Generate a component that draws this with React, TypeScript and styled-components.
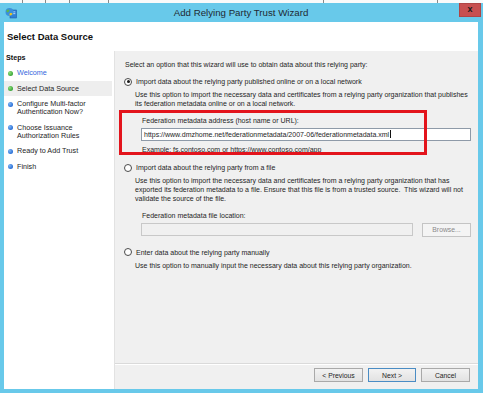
import styled, { createGlobalStyle, css } from 'styled-components';

const GlobalStyle = createGlobalStyle`
  html, body {
    margin: 0;
    padding: 0;
    background: #ffffff;
  }
  body {
    font-family: "Liberation Sans", Arial, sans-serif;
    color: #1e1e1e;
  }
`;

const steps = [
  { label: ['Welcome'], done: true, link: true },
  { label: ['Select Data Source'], done: true, current: true },
  { label: ['Configure Multi-factor', 'Authentication Now?'] },
  { label: ['Choose Issuance', 'Authorization Rules'] },
  { label: ['Ready to Add Trust'] },
  { label: ['Finish'] },
];

function WizardIcon() {
  return (
    <svg width="12" height="12" viewBox="0 0 12 12">
      <rect x="5" y="3" width="6.5" height="8" fill="#2f7fd6" stroke="#1b5ea8" strokeWidth="0.6" />
      <rect x="6.3" y="4.5" width="4" height="0.8" fill="#cfe6ff" />
      <rect x="6.3" y="6.3" width="4" height="0.8" fill="#cfe6ff" />
      <circle cx="4.5" cy="5" r="4" fill="#3a8fdc" />
      <path d="M1.5 3.5 Q3 2 4.5 3 Q4 5 2.5 5.5 Q1 5 1.5 3.5 Z" fill="#5cb84a" />
      <path d="M5 6 Q7 5.5 7.5 7 Q6 8.8 4.5 8.6 Q4.2 7 5 6 Z" fill="#f0c419" />
    </svg>
  );
}

export default function App() {
  return (
    <>
      <GlobalStyle />
      <Page>
        <BehindStrip />
        <Window>
          <TitleBar>
            <TitleIcon>
              <WizardIcon />
            </TitleIcon>
            <Title>Add Relying Party Trust Wizard</Title>
            <CloseButton>x</CloseButton>
          </TitleBar>
          <Content>
            <Header>Select Data Source</Header>
            <Body>
              <StepsPanel>
                <StepsLabel>Steps</StepsLabel>
                {steps.map((s) => (
                  <StepItem key={s.label[0]} $current={!!s.current}>
                    <Dot $done={!!s.done} />
                    <StepText $link={!!s.link}>
                      {s.label.map((l) => (
                        <div key={l}>{l}</div>
                      ))}
                    </StepText>
                  </StepItem>
                ))}
              </StepsPanel>

              <RightPanel>
                <Main>
                  <Intro>Select an option that this wizard will use to obtain data about this relying party:</Intro>

                  <RadioRow>
                    <Radio $checked />
                    <span>Import data about the relying party published online or on a local network</span>
                  </RadioRow>
                  <Desc>
                    Use this option to import the necessary data and certificates from a relying party organization that publishes
                    <br />
                    its federation metadata online or on a local network.
                  </Desc>
                  <Field>
                    <FieldLabel>Federation metadata address (host name or URL):</FieldLabel>
                    <TextBox $width={330}>
                      https://www.dmzhome.net/federationmetadata/2007-06/federationmetadata.xml
                      <Caret />
                    </TextBox>
                    <Example>Example: fs.contoso.com or https://www.contoso.com/app</Example>
                  </Field>

                  <RadioRow $top={9}>
                    <Radio />
                    <span>Import data about the relying party from a file</span>
                  </RadioRow>
                  <Desc>
                    Use this option to import the necessary data and certificates from a relying party organization that has
                    <br />
                    exported its federation metadata to a file. Ensure that this file is from a trusted source.&nbsp; This wizard will not
                    <br />
                    validate the source of the file.
                  </Desc>
                  <Field>
                    <FieldLabel>Federation metadata file location:</FieldLabel>
                    <FileRow>
                      <TextBox $width={272} $disabled />
                      <WinButton $width={49} $disabled>
                        Browse...
                      </WinButton>
                    </FileRow>
                  </Field>

                  <RadioRow $top={11}>
                    <Radio />
                    <span>Enter data about the relying party manually</span>
                  </RadioRow>
                  <Desc>Use this option to manually input the necessary data about this relying party organization.</Desc>

                  <Highlight />
                </Main>
                <Footer>
                  <WinButton $width={49}>&lt; Previous</WinButton>
                  <WinButton $width={48} $default>
                    Next &gt;
                  </WinButton>
                  <WinButton $width={49}>Cancel</WinButton>
                </Footer>
              </RightPanel>
            </Body>
          </Content>
        </Window>
      </Page>
    </>
  );
}

const Page = styled.div`
  width: 483px;
  height: 393px;
  display: flex;
  flex-direction: column;
  overflow: hidden;
`;

const BehindStrip = styled.div`
  height: 3px;
  background-color: #fafafa;
  background-image: linear-gradient(
    90deg,
    transparent 0 22px,
    #8a8a8a 22px 23px,
    transparent 23px 45px,
    #8a8a8a 45px 46px,
    transparent 46px 69px,
    #8a8a8a 69px 70px,
    transparent 70px 108px,
    #8a8a8a 108px 109px,
    transparent 109px 323px,
    #8a8a8a 323px 324px,
    transparent 324px 437px,
    #8a8a8a 437px 438px,
    transparent 438px
  );
`;

const Window = styled.div`
  flex: 1;
  display: flex;
  flex-direction: column;
  background: #68c9ea;
  padding: 0 5px 4px 4px;
`;

const TitleBar = styled.div`
  height: 19px;
  display: grid;
  grid-template-columns: 1fr auto 1fr;
  align-items: center;
`;

const TitleIcon = styled.div`
  display: flex;
  padding-left: 1px;
`;

const Title = styled.div`
  font-size: 9.7px;
  color: #1f2a33;
`;

const CloseButton = styled.div`
  justify-self: end;
  align-self: start;
  margin-right: -3px;
  width: 22px;
  height: 14px;
  background: #c75050;
  border: 1px solid #b04545;
  box-sizing: border-box;
  display: flex;
  align-items: center;
  justify-content: center;
  font-size: 9px;
  font-weight: bold;
  color: #1a1a1a;
  line-height: 1;
  padding-bottom: 2px;
`;

const Content = styled.div`
  flex: 1;
  display: flex;
  flex-direction: column;
  background: #ffffff;
`;

const Header = styled.div`
  height: 29px;
  display: flex;
  align-items: center;
  padding-left: 3px;
  font-size: 9.5px;
  font-weight: bold;
  color: #111;
`;

const Body = styled.div`
  flex: 1;
  display: grid;
  grid-template-columns: 111px 1fr;
`;

const StepsPanel = styled.div`
  background: #ffffff;
  border-right: 1px solid #e2e2e2;
  padding-top: 1.5px;
`;

const StepsLabel = styled.div`
  font-size: 7.2px;
  font-weight: bold;
  line-height: 9px;
  padding-left: 2px;
  margin-bottom: 3.5px;
  color: #111;
`;

const StepItem = styled.div<{ $current: boolean }>`
  display: flex;
  align-items: flex-start;
  gap: 4.5px;
  padding: 4px 0 3.5px 3.5px;
  margin-right: 2px;
  background: ${({ $current }) => ($current ? '#eeeeee' : 'transparent')};
`;

const Dot = styled.span<{ $done: boolean }>`
  flex: none;
  width: 5px;
  height: 5px;
  margin-top: 1.5px;
  border-radius: 50%;
  background: ${({ $done }) =>
    $done
      ? 'radial-gradient(circle at 35% 35%, #8fe07a, #3aa53a 70%)'
      : 'radial-gradient(circle at 35% 35%, #7fb6f5, #2a6fd6 70%)'};
`;

const StepText = styled.div<{ $link: boolean }>`
  font-size: 7.2px;
  line-height: 8px;
  color: ${({ $link }) => ($link ? '#3366dd' : '#1e1e1e')};
`;

const RightPanel = styled.div`
  background: #f0f0f0;
  display: flex;
  flex-direction: column;
`;

const Main = styled.div`
  flex: 1;
  position: relative;
  padding: 8.5px 6px 0 9px;
  font-size: 7px;
  line-height: 9px;
  color: #1e1e1e;
`;

const Intro = styled.div`
  padding-left: 1px;
  margin-bottom: 8.5px;
`;

const RadioRow = styled.div<{ $top?: number }>`
  display: flex;
  align-items: center;
  gap: 4px;
  height: 9px;
  margin-top: ${({ $top }) => $top ?? 0}px;
`;

const Radio = styled.span<{ $checked?: boolean }>`
  flex: none;
  width: 8px;
  height: 8px;
  box-sizing: border-box;
  border-radius: 50%;
  border: 1px solid #4a4a4a;
  background: #ffffff;
  position: relative;
  ${({ $checked }) =>
    $checked &&
    css`
      &::after {
        content: '';
        position: absolute;
        left: 1.5px;
        top: 1.5px;
        width: 3px;
        height: 3px;
        border-radius: 50%;
        background: #1a1a1a;
      }
    `}
`;

const Desc = styled.div`
  padding-left: 11px;
  margin-top: 4px;
  white-space: nowrap;
`;

const Field = styled.div`
  padding-left: 17px;
  margin-top: 8px;
  display: flex;
  flex-direction: column;
  align-items: flex-start;
`;

const FieldLabel = styled.div`
  padding-left: 1px;
  margin-bottom: 2.5px;
`;

const TextBox = styled.div<{ $width: number; $disabled?: boolean }>`
  width: ${({ $width }) => $width}px;
  height: 13px;
  box-sizing: border-box;
  border: 1px solid ${({ $disabled }) => ($disabled ? '#c8c8c8' : '#8e9aa8')};
  background: ${({ $disabled }) => ($disabled ? '#f0f0f0' : '#ffffff')};
  padding-left: 2px;
  display: flex;
  align-items: center;
  white-space: nowrap;
  color: #1e1e1e;
`;

const Caret = styled.span`
  display: inline-block;
  width: 1px;
  height: 8px;
  background: #111;
  margin-left: 0.5px;
`;

const Example = styled.div`
  padding-left: 1px;
  margin-top: 4.5px;
`;

const FileRow = styled.div`
  display: flex;
  gap: 9px;
`;

const WinButton = styled.div<{ $width: number; $disabled?: boolean; $default?: boolean }>`
  width: ${({ $width }) => $width}px;
  height: 14px;
  box-sizing: border-box;
  display: flex;
  align-items: center;
  justify-content: center;
  font-size: 6.8px;
  color: ${({ $disabled }) => ($disabled ? '#8a8a8a' : '#1e1e1e')};
  background: ${({ $disabled }) =>
    $disabled ? '#f4f4f4' : 'linear-gradient(#f2f2f2, #e2e2e2)'};
  border: 1px solid
    ${({ $disabled, $default }) => ($default ? '#4a8cc4' : $disabled ? '#c4c4c4' : '#a9a9a9')};
`;

const Highlight = styled.div`
  position: absolute;
  left: 4px;
  top: 59px;
  width: 308px;
  height: 45px;
  box-sizing: border-box;
  border: 3px solid #e3141c;
  pointer-events: none;
`;

const Footer = styled.div`
  height: 26px;
  box-sizing: border-box;
  border-top: 1px solid #dadada;
  box-shadow: inset 0 1px 0 #ffffff;
  display: flex;
  justify-content: flex-end;
  gap: 5px;
  padding: 4px 8px 0 0;
`;
